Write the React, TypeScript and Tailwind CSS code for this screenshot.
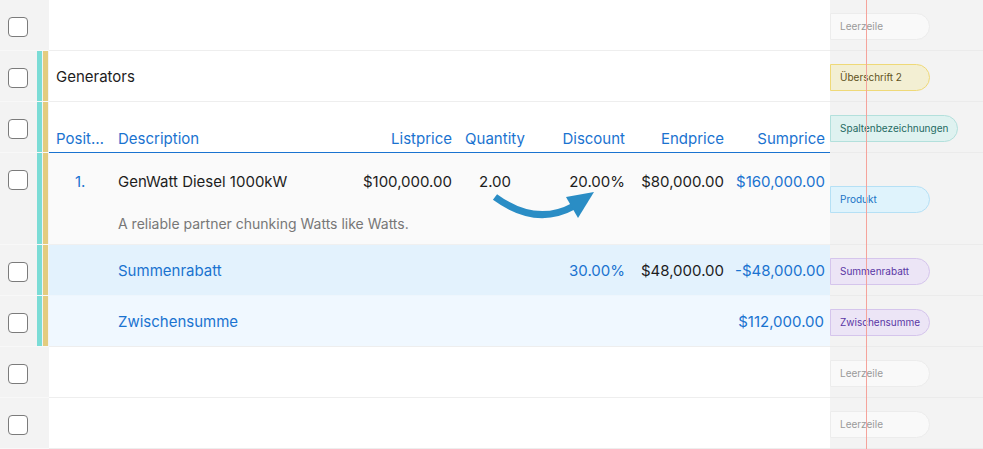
import React from 'react';

const BLUE = 'text-[#1a73d0]';

type Tag = { label: string; cls: string };

const tags: Record<string, Tag> = {
  leer: { label: 'Leerzeile', cls: 'bg-[#f9f9f9] border-[#ececec] text-[#9a9a9a]' },
  h2: { label: 'Überschrift 2', cls: 'bg-[#f3efd3] border-[#efd978] text-[#5f521c]' },
  cols: { label: 'Spaltenbezeichnungen', cls: 'bg-[#dff2f0] border-[#b3e0dc] text-[#1f6b63]' },
  prod: { label: 'Produkt', cls: 'bg-[#dff3fc] border-[#b5e0f5] text-[#1a74c6]' },
  rabatt: { label: 'Summenrabatt', cls: 'bg-[#ece5f6] border-[#d5c5ec] text-[#5a37a5]' },
  zwischen: { label: 'Zwischensumme', cls: 'bg-[#ece5f6] border-[#d5c5ec] text-[#5a37a5]' },
};

function Checkbox() {
  return <div className="w-5 h-5 rounded-[4px] border-[1.5px] border-[#7b7b7b] bg-white" />;
}

function Row({ h = 'h-[51px]', bars = false, content, contentCls = 'bg-white border-[#eeeeee]', tag }: {
  h?: string; bars?: boolean; content?: React.ReactNode; contentCls?: string; tag: Tag;
}) {
  return (
    <div className={`flex ${h}`}>
      {/* gutter */}
      <div className="w-[49px] flex bg-[#f3f3f3] border-b border-[#f8f8f8]">
        <div className="pl-[8px] pt-[17px]"><Checkbox /></div>
        {bars && (
          <div className="ml-auto flex gap-[1px] pr-[1px]">
            <div className="w-[5px] bg-[#7bdcd6]" />
            <div className="w-[5px] bg-[#e3cc7f]" />
          </div>
        )}
      </div>
      {/* content */}
      <div className={`w-[781px] border-b relative ${contentCls}`}>{content}</div>
      {/* type panel */}
      <div className="w-[153px] bg-[#f3f3f3] border-b border-[#ebebeb] flex items-center pt-[2px]">
        <div className={`h-[27px] min-w-[100px] pl-[9px] pr-[9px] flex items-center rounded-r-full border text-[10px] ${tag.cls}`}>
          {tag.label}
        </div>
      </div>
    </div>
  );
}

function Cols({ pos, desc, list, qty, disc, end, sum }: {
  pos?: React.ReactNode; desc?: React.ReactNode; list?: React.ReactNode; qty?: React.ReactNode;
  disc?: React.ReactNode; end?: React.ReactNode; sum?: React.ReactNode;
}) {
  return (
    <div className="flex pl-[7px] pr-[5px] whitespace-nowrap">
      <div className="w-[62px] pr-[13px] truncate">{pos}</div>
      <div className="w-[204px]">{desc}</div>
      <div className="w-[130px] text-right">{list}</div>
      <div className="w-[86px] text-center">{qty}</div>
      <div className="w-[87px] text-right">{disc}</div>
      <div className="w-[99px] text-right">{end}</div>
      <div className="w-[101px] text-right">{sum}</div>
    </div>
  );
}

function Arrow() {
  return (
    <svg className="absolute left-[441px] top-[32px]" width="110" height="40" viewBox="0 0 110 40">
      <path d="M 5 12 Q 46 42 84 21" fill="none" stroke="#2a8dc5" strokeWidth="7" />
      <polygon points="104,7 76,12 88,33" fill="#2a8dc5" />
    </svg>
  );
}

export default function App() {
  return (
    <div
      className="relative w-[983px] h-[449px] overflow-hidden bg-white text-[15px] text-[#1d1d1d]"
      style={{ fontFamily: 'Inter, "Noto Sans", sans-serif' }}
    >
      <Row tag={tags.leer} />
      <Row
        bars
        tag={tags.h2}
        content={<div className="h-full flex items-center pl-[7px] pt-[3px]">Generators</div>}
      />
      <Row
        bars
        tag={tags.cols}
        contentCls="bg-white border-[#1a73d0]"
        content={
          <div className={`h-full flex flex-col justify-end pb-[2px] ${BLUE}`}>
            <Cols pos="Position" desc="Description" list="Listprice" qty="Quantity" disc="Discount" end="Endprice" sum="Sumprice" />
          </div>
        }
      />
      <Row
        bars
        h="h-[92px]"
        tag={tags.prod}
        contentCls="bg-[#fafafa] border-[#f0f0f0]"
        content={
          <div className="pt-[18px]">
            <Cols
              pos={<span className={`pl-[19px] ${BLUE}`}>1.</span>}
              desc="GenWatt Diesel 1000kW"
              list="$100,000.00"
              qty="2.00"
              disc="20.00%"
              end="$80,000.00"
              sum={<span className={BLUE}>$160,000.00</span>}
            />
            <div className="pl-[69px] mt-[19px] text-[14px] text-[#777777]">A reliable partner chunking Watts like Watts.</div>
            <Arrow />
          </div>
        }
      />
      <Row
        bars
        tag={tags.rabatt}
        contentCls="bg-[#e3f2fd] border-[#eef6fd]"
        content={
          <div className="h-full flex items-center pt-[3px]">
            <Cols
              desc={<span className={BLUE}>Summenrabatt</span>}
              disc={<span className={BLUE}>30.00%</span>}
              end="$48,000.00"
              sum={<span className={BLUE}>-$48,000.00</span>}
            />
          </div>
        }
      />
      <Row
        bars
        tag={tags.zwischen}
        contentCls="bg-[#f0f8ff] border-[#eeeeee]"
        content={
          <div className="h-full flex items-center pt-[3px]">
            <Cols
              desc={<span className={BLUE}>Zwischensumme</span>}
              sum={<span className={`pr-[1px] ${BLUE}`}>$112,000.00</span>}
            />
          </div>
        }
      />
      <Row tag={tags.leer} />
      <Row tag={tags.leer} />

      {/* guide line over the type panel */}
      <div className="absolute top-0 left-[866px] w-px h-full bg-[#f5a39b]" />
    </div>
  );
}
